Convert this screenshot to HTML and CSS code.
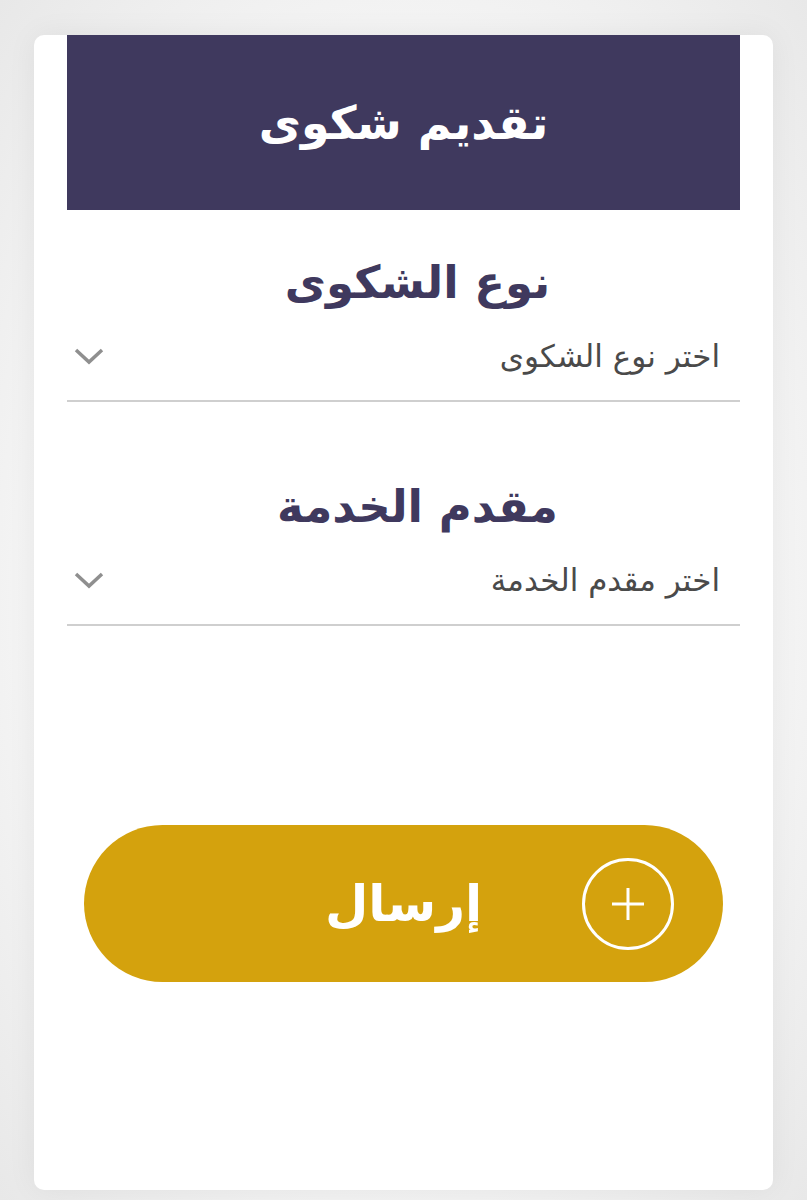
FILE: index.html
```html
<!DOCTYPE html>
<html lang="ar" dir="rtl">

    <head>
        <meta charset="utf-8">
        <title>تقديم شكوى</title>
        <link rel="stylesheet" href="styles.css">
    </head>

    <body>
        <div class="card">
            <div class="card-header">
                <h1>تقديم شكوى</h1>
            </div>

            <div class="field">
                <label class="field-label">نوع الشكوى</label>
                <div class="select">
                    <span class="select-text">اختر نوع الشكوى</span>
                    <svg class="chevron" viewBox="0 0 32 20" width="32" height="20">
                        <path d="M3 4 L16 16 L29 4" fill="none" stroke="#8f8f8f" stroke-width="3.5" />
                    </svg>
                </div>
            </div>

            <div class="field">
                <label class="field-label">مقدم الخدمة</label>
                <div class="select">
                    <span class="select-text">اختر مقدم الخدمة</span>
                    <svg class="chevron" viewBox="0 0 32 20" width="32" height="20">
                        <path d="M3 4 L16 16 L29 4" fill="none" stroke="#8f8f8f" stroke-width="3.5" />
                    </svg>
                </div>
            </div>

            <button class="submit-btn">
                <span class="submit-icon">
                    <svg viewBox="0 0 40 40" width="40" height="40">
                        <path d="M20 4 V36 M4 20 H36" stroke="#fff" stroke-width="3" />
                    </svg>
                </span>
                <span class="submit-text">إرسال</span>
            </button>
        </div>
    </body>

</html>
```

FILE: styles.css
```css
html {
    background: #ececec;
}

body {
    margin: 0;
    padding: 35px 34px 10px;
    font-family: "DejaVu Sans", sans-serif;
    background: radial-gradient(ellipse at center, #f6f6f6 60%, #e8e8e8 100%);
    min-height: 1200px;
    box-sizing: border-box;
}

.card {
    background: #fff;
    border-radius: 10px;
    padding: 0 33px;
    height: 1155px;
    box-sizing: border-box;
    box-shadow: 0 0 30px rgba(0, 0, 0, 0.06);
}

.card-header {
    background: #3f395e;
    height: 175px;
    display: flex;
    align-items: center;
    justify-content: center;
}

.card-header h1 {
    margin: 0;
    color: #fff;
    font-size: 46px;
    font-weight: bold;
}

.field {
    display: flex;
    flex-direction: column;
    padding-top: 45px;
}

.field + .field {
    padding-top: 77px;
}

.field-label {
    text-align: center;
    color: #3f395e;
    font-size: 45px;
    font-weight: bold;
    line-height: 56px;
    padding-left: 28px;
}

.select {
    display: flex;
    align-items: center;
    justify-content: space-between;
    height: 91px;
    padding: 0 2px 0 6px;
    box-sizing: border-box;
    border-bottom: 2px solid #cfcfcf;
}

.select-text {
    font-size: 31px;
    color: #4a4a4a;
    padding-right: 18px;
}

.chevron {
    display: block;
}

.submit-btn {
    display: grid;
    grid-template-columns: 1fr auto 1fr;
    align-items: center;
    width: 639px;
    height: 157px;
    margin: 199px auto 0;
    padding: 0 49px;
    border: none;
    border-radius: 80px;
    background: #d4a20d;
    color: #fff;
    font-family: inherit;
    cursor: pointer;
}

.submit-icon {
    justify-self: start;
    width: 86px;
    height: 86px;
    border: 3px solid #fff;
    border-radius: 50%;
    display: flex;
    align-items: center;
    justify-content: center;
}

.submit-text {
    font-size: 50px;
    font-weight: bold;
}
```
